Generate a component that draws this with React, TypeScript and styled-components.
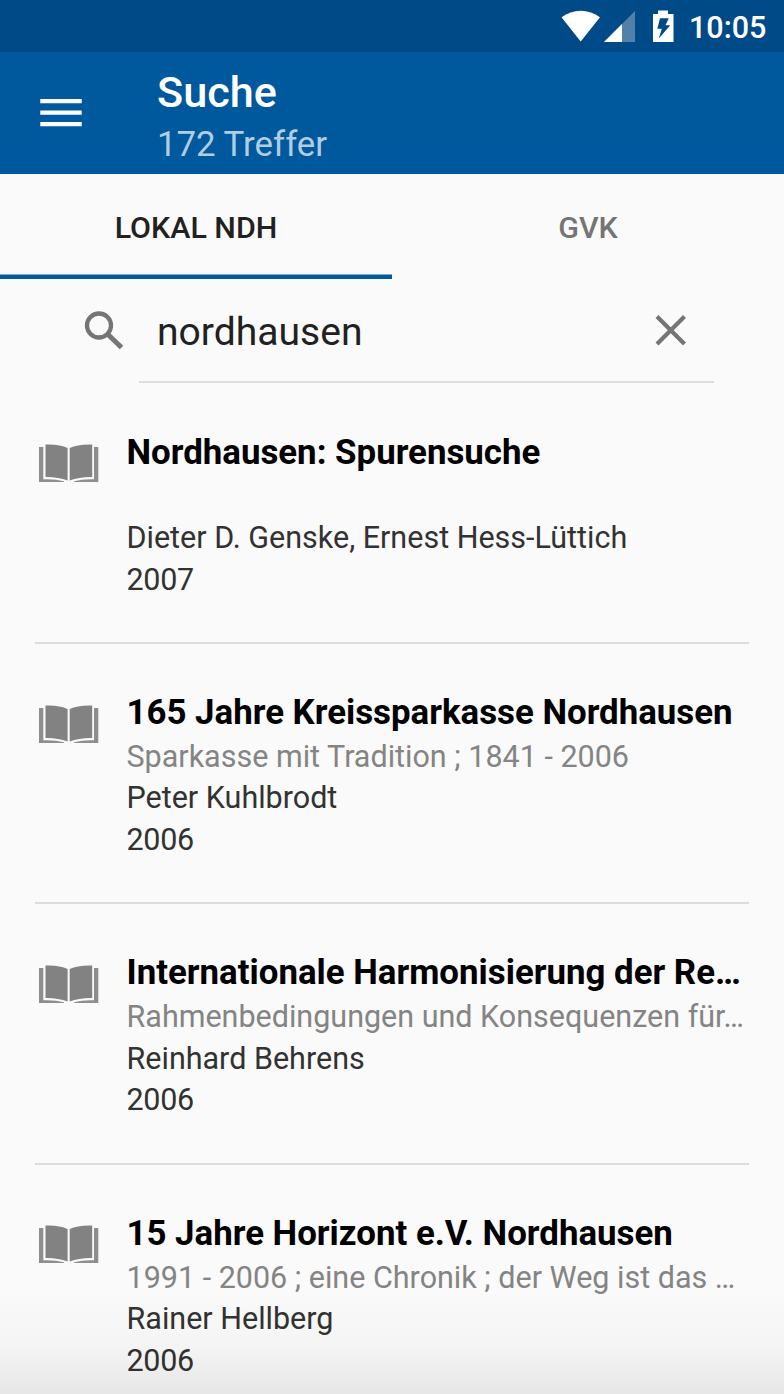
import React from "react";
import styled, { createGlobalStyle } from "styled-components";

const GlobalStyle = createGlobalStyle`
  * { box-sizing: border-box; }
  body { margin: 0; background: #fafafa; font-family: Roboto, "Liberation Sans", sans-serif; }
`;

const Screen = styled.div`
  position: relative;
  width: 784px;
  height: 1394px;
  overflow: hidden;
  background: #fafafa;
`;

const StatusBar = styled.div`
  height: 52px;
  padding: 0 17px 0 0;
  display: flex;
  align-items: center;
  justify-content: flex-end;
  background: #004b87;
  color: #fff;
`;

const StatusIcons = styled.svg`
  display: block;
  width: 120px;
  height: 52px;
`;

const Clock = styled.span`
  width: 78px;
  margin-left: 9px;
  padding-top: 3px;
  font-size: 30.5px;
  font-weight: 500;
  line-height: 36px;
  white-space: nowrap;
`;

const Toolbar = styled.header`
  height: 122px;
  padding-left: 40px;
  display: flex;
  background: #00589d;
`;

const MenuButton = styled.button`
  width: 42px;
  height: 122px;
  padding: 0;
  border: 0;
  background: none;
  svg { display: block; }
`;

const Heading = styled.div`
  margin-left: 75px;
  padding-top: 15px;
`;

const ScreenTitle = styled.h1`
  margin: 0;
  font-size: 43.2px;
  font-weight: 500;
  line-height: 52px;
  color: #fff;
`;

const HitCount = styled.div`
  margin-top: -1px;
  font-size: 34.8px;
  line-height: 52px;
  color: #b2cde2;
`;

const Tabs = styled.nav`
  height: 105px;
  display: flex;
`;

const Tab = styled.button<{ $active?: boolean }>`
  flex: 1;
  padding: 5px 0 4px;
  border: 0;
  background: ${(p) =>
    p.$active
      ? "linear-gradient(#00589d, #00589d) bottom / 100% 4px no-repeat, linear-gradient(#7dabcd, #7dabcd) bottom / 100% 5px no-repeat"
      : "none"};
  font-family: inherit;
  font-size: 30.4px;
  font-weight: 500;
  color: ${(p) => (p.$active ? "#212121" : "#757575")};
`;

const SearchBar = styled.div`
  height: 104px;
  padding: 0 70px 0 83px;
  display: flex;
`;

const SearchIcon = styled.svg`
  display: block;
  flex: none;
  width: 42px;
  height: 103px;
`;

const SearchField = styled.div`
  flex: 1;
  height: 104px;
  margin-left: 14px;
  padding-left: 18px;
  display: flex;
  border-bottom: 2px solid #dedede;
`;

const Query = styled.span`
  flex: 1;
  padding-top: 1px;
  font-size: 39.1px;
  line-height: 104px;
  color: #212121;
`;

const ClearIcon = styled.svg`
  display: block;
  width: 32px;
  height: 102px;
  margin-right: 27px;
`;

const Results = styled.ul`
  margin: 0;
  padding: 0.6px 35px 0;
  list-style: none;
`;

const Result = styled.li`
  height: 260.4px;
  padding: 47.1px 0 0 3px;
  display: flex;
  border-bottom: 2px solid #dcdcdc;
`;

const BookIcon = styled.svg`
  display: block;
  flex: none;
  width: 62px;
  height: 40px;
  margin: 12.5px 26.5px 0 0;
`;

const Details = styled.div`
  min-width: 0;
  font-size: 30.5px;
  line-height: 41.6px;
  white-space: nowrap;
  color: #323232;
`;

const BookTitle = styled.h2`
  margin: 0 0 0.8px;
  font-size: 34.83px;
  font-weight: 700;
  line-height: 44px;
  color: #000;
`;

const Subtitle = styled.div`
  height: 41.6px;
  color: #848484;
`;

const Year = styled.div`
  letter-spacing: -0.3px;
`;

const BottomShade = styled.div`
  position: absolute;
  left: 0;
  right: 0;
  bottom: 0;
  height: 104px;
  pointer-events: none;
  background: linear-gradient(rgba(0, 0, 0, 0), rgba(0, 0, 0, 0.025) 55%, rgba(0, 0, 0, 0.08));
`;

const SoftShapes = styled.g`
  fill: #828282;
  filter: blur(0.55px);
`;

const Book = () => (
  <BookIcon viewBox="0 0 62 40">
    <SoftShapes>
      <path d="M7.500 1.500Q22 1 29.600 5V37.500Q20 33.800 7.500 34Z" />
      <path d="M54.200 1.500Q40 1 31.700 5V37.500Q41 33.800 54.200 34Z" />
      <path d="M1 4H5.300V36.300Q17 35.800 26 38.200V39H1Z" opacity=".9" />
      <path d="M60.300 4H56V36.300Q45 35.800 36 38.200V39H60.300Z" opacity=".9" />
    </SoftShapes>
  </BookIcon>
);

const books = [
  { title: "Nordhausen: Spurensuche", subtitle: "", author: "Dieter D. Genske, Ernest Hess-Lüttich", year: "2007" },
  { title: "165 Jahre Kreissparkasse Nordhausen", subtitle: "Sparkasse mit Tradition ; 1841 - 2006", author: "Peter Kuhlbrodt", year: "2006" },
  { title: "Internationale Harmonisierung der Re…", subtitle: "Rahmenbedingungen und Konsequenzen für…", author: "Reinhard Behrens", year: "2006" },
  { title: "15 Jahre Horizont e.V. Nordhausen", subtitle: "1991 - 2006 ; eine Chronik ; der Weg ist das …", author: "Rainer Hellberg", year: "2006" },
];

export default function App() {
  return (
    <Screen>
      <GlobalStyle />
      <StatusBar>
        <StatusIcons viewBox="560 0 120 52">
          <path d="M561.500 17.300C573 8.500 588.500 8.500 600 17.300L580.700 41.500Z" fill="#fff" />
          <path d="M635 11V42H604Z" fill="#5081ab" />
          <path d="M622 24V42H604Z" fill="#fff" />
          <path d="M658 10.500H668V14H673.500V42H653V14H658Z" fill="#fff" />
          <path d="M660 18.300H668.800L665.500 25.300H670.300L658.800 38.500L661.800 28.800H657.300Z" fill="#004b87" />
        </StatusIcons>
        <Clock>10:05</Clock>
      </StatusBar>
      <Toolbar>
        <MenuButton aria-label="Menü">
          <svg width="42" height="122" viewBox="0 0 42 122">
            <path d="M.3 47H41.700V51.300H.3ZM.3 58.500H41.700V62.800H.3ZM.3 70H41.700V74.300H.3Z" fill="#fff" />
          </svg>
        </MenuButton>
        <Heading>
          <ScreenTitle>Suche</ScreenTitle>
          <HitCount>172 Treffer</HitCount>
        </Heading>
      </Toolbar>
      <Tabs>
        <Tab $active>LOKAL NDH</Tab>
        <Tab>GVK</Tab>
      </Tabs>
      <SearchBar>
        <SearchIcon viewBox="83 279 42 103">
          <circle cx="99" cy="325.500" r="12" fill="none" stroke="#757575" strokeWidth="4.300" />
          <path d="M108 334.500L121.500 347.500" stroke="#757575" strokeWidth="5" />
        </SearchIcon>
        <SearchField>
          <Query>nordhausen</Query>
          <ClearIcon viewBox="655 279 32 102">
            <path d="M657 316.500L684.500 344M684.500 316.500L657 344" stroke="#757575" strokeWidth="4.200" />
          </ClearIcon>
        </SearchField>
      </SearchBar>
      <Results>
        {books.map((book) => (
          <Result key={book.title}>
            <Book />
            <Details>
              <BookTitle>{book.title}</BookTitle>
              <Subtitle>{book.subtitle}</Subtitle>
              <div>{book.author}</div>
              <Year>{book.year}</Year>
            </Details>
          </Result>
        ))}
      </Results>
      <BottomShade />
    </Screen>
  );
}
